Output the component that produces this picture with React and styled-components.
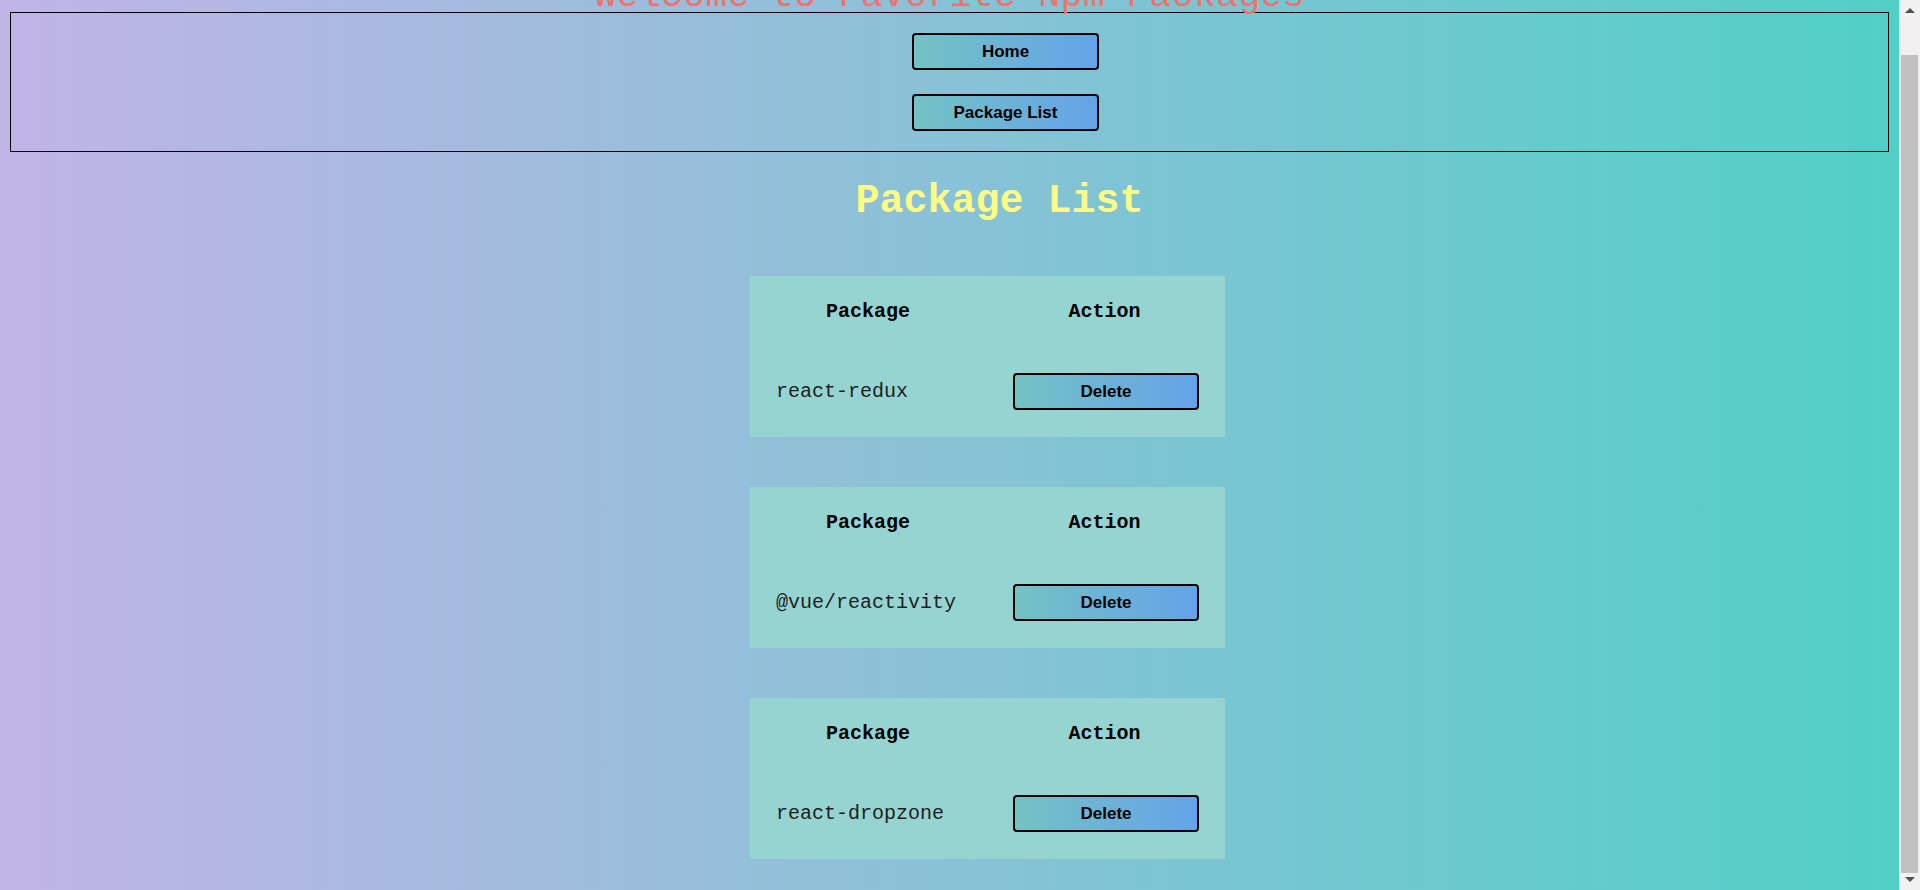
import styled, { createGlobalStyle } from 'styled-components';

const packages = ['react-redux', '@vue/reactivity', 'react-dropzone'];

export default function App() {
  return (
    <>
      <GlobalStyle />
      <Page>
        <Title>Welcome to Favorite Npm Packages</Title>
        <Nav>
          <NavButton>Home</NavButton>
          <NavButton>Package List</NavButton>
        </Nav>
        <Heading>Package List</Heading>
        <CardList>
          {packages.map(name => (
            <Card key={name}>
              <HeadCell>Package</HeadCell>
              <HeadCell>Action</HeadCell>
              <NameCell>{name}</NameCell>
              <ActionCell>
                <Button>Delete</Button>
              </ActionCell>
            </Card>
          ))}
        </CardList>
      </Page>
      <Scrollbar>
        <Arrow />
        <Thumb />
        <Arrow $down />
      </Scrollbar>
    </>
  );
}

const GlobalStyle = createGlobalStyle`
  html, body {
    margin: 0;
  }
  body {
    min-height: 100vh;
    background: linear-gradient(to right, #c0b4e6, #50d0c6);
    font-family: "Liberation Mono", "Courier New", monospace;
  }
`;

const Page = styled.div`
  padding: 0 29px 30px 8px;
`;

const Title = styled.h1`
  margin: -19px 0 0;
  text-align: center;
  font-size: 37px;
  font-weight: 400;
  line-height: 30px;
  color: #f2706e;
`;

const Nav = styled.nav`
  margin: 1px 2px 0;
  border: 1px solid #000;
  display: flex;
  flex-direction: column;
  align-items: center;
  gap: 24px;
  padding: 20px 0 20px 112px;
`;

const Button = styled.button`
  width: 186px;
  height: 37px;
  padding: 0;
  border: 2px solid #000;
  border-radius: 4px;
  background: linear-gradient(to right, #74c2c4, #64a3e9);
  color: #000;
  font-family: "Liberation Sans", Arial, sans-serif;
  font-weight: 700;
  font-size: 17px;
  cursor: pointer;
`;

const NavButton = styled(Button)`
  width: 187px;
`;

const Heading = styled.h2`
  margin: 27px 0 0;
  padding-left: 100px;
  text-align: center;
  font-size: 40px;
  font-weight: 700;
  line-height: 45px;
  color: #fcfc86;
`;

const CardList = styled.div`
  margin-top: 52px;
  padding-left: 76px;
  display: flex;
  flex-direction: column;
  align-items: center;
  gap: 50px;
`;

const Card = styled.div`
  display: grid;
  grid-template-columns: 232px 237px;
  gap: 2px;
  padding: 2px;
  background: #96d4d2;
`;

const HeadCell = styled.div`
  padding: 22px 0 23px;
  text-align: center;
  font-size: 20px;
  font-weight: 700;
  line-height: 23px;
  color: #000;
`;

const NameCell = styled.div`
  height: 87px;
  padding-left: 24px;
  display: flex;
  align-items: center;
  font-size: 20px;
  color: #1e1e1e;
`;

const ActionCell = styled.div`
  height: 87px;
  padding-left: 3px;
  display: flex;
  align-items: center;
  justify-content: center;
`;

const Scrollbar = styled.div`
  position: fixed;
  top: 0;
  right: 0;
  bottom: 0;
  width: 21px;
  background: #f1f1f1;
  display: flex;
  flex-direction: column;
  align-items: center;
  padding: 8px 0 8px;
  box-sizing: border-box;
`;

const Arrow = styled.div`
  width: 0;
  height: 0;
  border-left: 5px solid transparent;
  border-right: 5px solid transparent;
  ${p => p.$down
    ? 'border-top: 5px solid #505050;'
    : 'border-bottom: 5px solid #505050;'}
`;

const Thumb = styled.div`
  flex: 1;
  align-self: stretch;
  margin: 42px 2px 4px;
  background: #c1c1c1;
`;
